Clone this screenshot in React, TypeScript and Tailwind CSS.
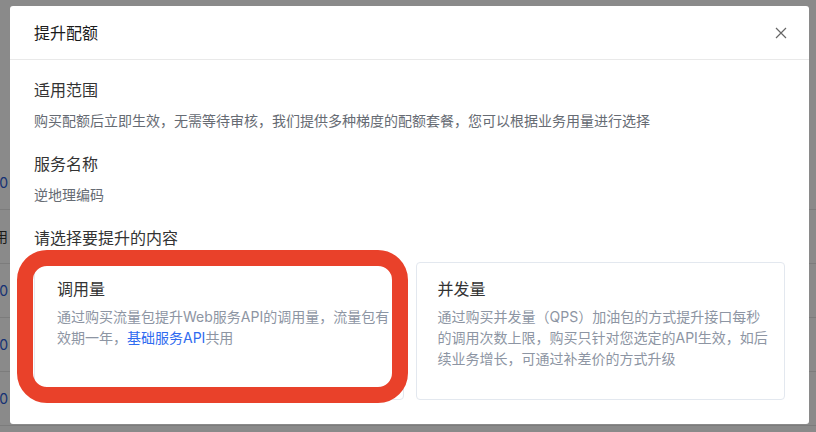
const rows = [
  { text: "0", blue: true },
  { text: "已使用", blue: false },
  { text: "0", blue: true },
  { text: "0", blue: true },
  { text: "0", blue: true },
];

const App = () => {
  return (
    <main className="relative h-[432px] w-[816px] overflow-hidden bg-white font-['Inter','Noto_Sans_CJK_SC',sans-serif]">
      {/* 背景页面表格 */}
      <section className="pt-[156px]">
        {rows.map((row, i) => (
          <div key={i} className="flex h-[54px] items-center border-b border-[#e6e6e6]">
            <p className={`-ml-[40px] w-[48px] whitespace-nowrap text-right text-[14px] ${row.blue ? "text-[#2a5bd7]" : "text-[#333]"}`}>{row.text}</p>
          </div>
        ))}
      </section>

      {/* 遮罩 */}
      <div className="absolute inset-0 bg-black/[0.46]" />

      {/* 弹窗 */}
      <section className="absolute left-[10px] top-[6px] flex h-[418px] w-[799px] flex-col rounded-[3px] bg-white">
        <header className="flex h-[54px] items-center justify-between border-b border-[#e9e9e9] pl-6 pr-[21px]">
          <h1 className="text-[16px] text-[#1a1a1a]">提升配额</h1>
          <svg width="14" height="14" viewBox="0 0 14 14" className="text-[#666]">
            <path d="M2 2 L12 12 M12 2 L2 12" stroke="currentColor" strokeWidth="1.2" fill="none" />
          </svg>
        </header>

        <div className="px-6 pt-[18px]">
          <h2 className="text-[16px] leading-6 text-[#333]">适用范围</h2>
          <p className="mt-2 text-[14px] leading-[22px] text-[#666b73]">
            购买配额后立即生效，无需等待审核，我们提供多种梯度的配额套餐，您可以根据业务用量进行选择
          </p>

          <h2 className="mt-5 text-[16px] leading-6 text-[#333]">服务名称</h2>
          <p className="mt-2 text-[14px] leading-[22px] text-[#666b73]">逆地理编码</p>

          <h2 className="mt-5 text-[16px] leading-6 text-[#333]">请选择要提升的内容</h2>

          {/* 选项卡片 */}
          <div className="mt-3 grid grid-cols-2 gap-3">
            <div className="h-[138px] rounded-[4px] border border-[#e3e8ef] pl-[22px] pr-[12px] pt-[14px]">
              <h3 className="text-[16px] leading-6 text-[#333]">调用量</h3>
              <p className="mt-[5px] whitespace-nowrap text-[14px] leading-[21px] text-[#8d95a3]">
                通过购买流量包提升Web服务API的调用量，流量包有
                <br />
                效期一年，<span className="text-[#2f6bf0]">基础服务API</span>共用
              </p>
            </div>
            <div className="h-[138px] rounded-[4px] border border-[#e3e8ef] pl-[21px] pr-[12px] pt-[14px]">
              <h3 className="text-[16px] leading-6 text-[#333]">并发量</h3>
              <p className="mt-[5px] whitespace-nowrap text-[14px] leading-[21px] text-[#8d95a3]">
                通过购买并发量（QPS）加油包的方式提升接口每秒
                <br />
                的调用次数上限，购买只针对您选定的API生效，如后
                <br />
                续业务增长，可通过补差价的方式升级
              </p>
            </div>
          </div>
        </div>
      </section>

      {/* 红色标注框 */}
      <div className="absolute left-[17px] top-[250px] h-[153px] w-[391px] rounded-[30px] border-[16px] border-[#e9412a]" />
    </main>
  );
};

export default App;
